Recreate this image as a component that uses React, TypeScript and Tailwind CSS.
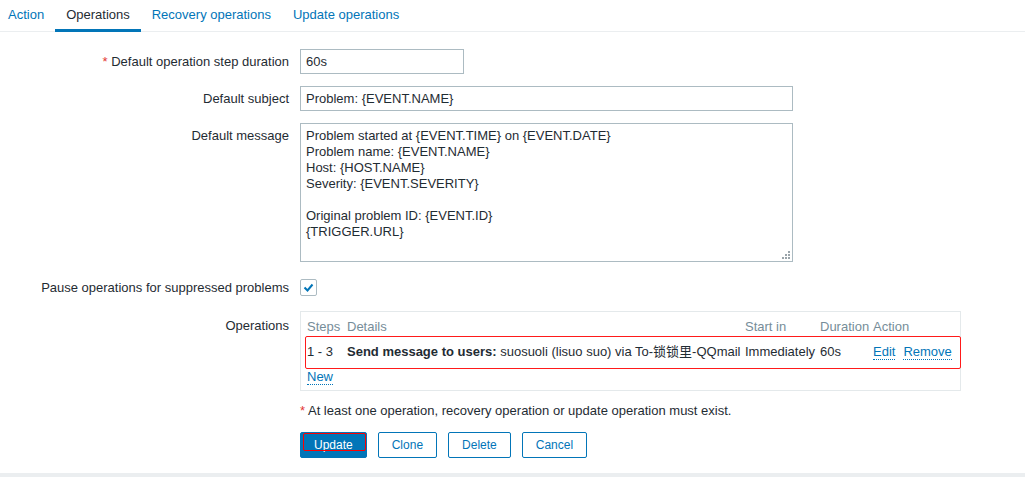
import React from 'react';

const tabs = ['Action', 'Operations', 'Recovery operations', 'Update operations'];

const messageLines = [
  'Problem started at {EVENT.TIME} on {EVENT.DATE}',
  'Problem name: {EVENT.NAME}',
  'Host: {HOST.NAME}',
  'Severity: {EVENT.SEVERITY}',
  '',
  'Original problem ID: {EVENT.ID}',
  '{TRIGGER.URL}',
];

const Row: React.FC<{ label: React.ReactNode; labelClass?: string; className?: string; children: React.ReactNode }> = ({
  label,
  labelClass = 'pt-[6px]',
  className = '',
  children,
}) => (
  <div className={`flex items-start ${className}`}>
    <div className={`w-[300px] shrink-0 pr-[11px] text-right leading-[14px] whitespace-nowrap ${labelClass}`}>{label}</div>
    <div>{children}</div>
  </div>
);

const Link: React.FC<{ children: React.ReactNode }> = ({ children }) => (
  <span className="text-[#0275b8] border-b border-dotted border-[#0275b8] cursor-pointer">{children}</span>
);

const cols = 'grid grid-cols-[40px_398px_75px_53px_1fr]';

export default function App() {
  return (
    <div className="min-h-[477px] bg-[#ebeef0] font-['Liberation_Sans','Noto_Sans_CJK_SC',sans-serif] text-[13px] text-[#1f2c33]">
      <div className="bg-white h-[473px]">
        {/* tabs */}
        <div className="flex h-[32px] border-b border-[#ebeef0] -ml-[3px]">
          {tabs.map(t => (
            <div
              key={t}
              className={`h-[32px] px-[11px] pt-[8px] leading-[14px] cursor-pointer ${
                t === 'Operations' ? 'border-b-[3px] border-[#0275b8] text-[#1f2c33]' : 'text-[#0275b8]'
              }`}
            >
              {t}
            </div>
          ))}
        </div>

        <div className="pt-[17px]">
          <Row label={<><span className="text-[#e33734]">*</span> Default operation step duration</>}>
            <div className="w-[164px] h-[25px] border border-[#acbbc2] px-[5px] flex items-center leading-[14px]">60s</div>
          </Row>

          <Row label="Default subject" className="mt-[12px]">
            <div className="w-[493px] h-[25px] border border-[#acbbc2] px-[5px] flex items-center leading-[14px]">
              Problem: {'{EVENT.NAME}'}
            </div>
          </Row>

          <Row label="Default message" className="mt-[12px]">
            <div className="relative w-[493px] h-[139px] border border-[#acbbc2] px-[5px] pt-[4px] leading-[16px]">
              {messageLines.map((l, i) => (
                <div key={i} className="h-[16px] whitespace-pre">{l}</div>
              ))}
              <svg className="absolute right-[2px] bottom-[2px]" width="8" height="8" viewBox="0 0 8 8">
                <g fill="#9aa4aa">
                  <rect x="6" y="0" width="2" height="2" />
                  <rect x="3" y="3" width="2" height="2" />
                  <rect x="6" y="3" width="2" height="2" />
                  <rect x="0" y="6" width="2" height="2" />
                  <rect x="3" y="6" width="2" height="2" />
                  <rect x="6" y="6" width="2" height="2" />
                </g>
              </svg>
            </div>
          </Row>

          <Row label="Pause operations for suppressed problems" className="mt-[13px]">
            <div className="mt-[4px] w-[17px] h-[17px] border border-[#acbbc2] rounded-[2px] bg-white flex items-center justify-center">
              <svg width="13" height="13" viewBox="0 0 13 13">
                <polyline points="2.5,6.5 5.5,9.5 10.5,3.5" fill="none" stroke="#0275b8" strokeWidth="2" />
              </svg>
            </div>
          </Row>

          <Row label="Operations" labelClass="pt-[8px]" className="mt-[15px]">
            <div className="w-[661px] border border-[#e4e9eb] pl-[4px] pt-[8px] pb-[6px] leading-[14px]">
              <div className={`${cols} pl-[2px] text-[#768d99]`}>
                <div>Steps</div>
                <div>Details</div>
                <div>Start in</div>
                <div>Duration</div>
                <div>Action</div>
              </div>
              <div className="mt-[2px] w-[656px] border border-[#ff1a1a] rounded-[2px] pl-[1px] pt-[8px] pb-[8px]">
                <div className={`${cols} whitespace-nowrap`}>
                  <div>1 - 3</div>
                  <div>
                    <b>Send message to users:</b> suosuoli (lisuo suo) via To-锁锁里-QQmail
                  </div>
                  <div>Immediately</div>
                  <div>60s</div>
                  <div className="flex gap-[8px]">
                    <Link>Edit</Link>
                    <Link>Remove</Link>
                  </div>
                </div>
              </div>
              <div className="mt-[1px] pl-[2px]">
                <Link>New</Link>
              </div>
            </div>
          </Row>

          <div className="ml-[300px] mt-[13px] leading-[14px]">
            <span className="text-[#e33734]">*</span> At least one operation, recovery operation or update operation must exist.
          </div>

          <div className="ml-[300px] mt-[14px] flex gap-[11px] text-[12px]">
            <button className="relative h-[26px] px-[13px] rounded-[2px] border border-[#0275b8] bg-[#0275b8] text-white leading-[14px]">
              Update
              <span className="absolute block left-[2px] right-0 top-0 h-[18px] border border-[#ff0000] rounded-[2px]" />
            </button>
            {['Clone', 'Delete', 'Cancel'].map(b => (
              <button
                key={b}
                className="h-[26px] px-[13px] rounded-[2px] border border-[#0275b8] bg-white text-[#0275b8] leading-[14px]"
              >
                {b}
              </button>
            ))}
          </div>
        </div>
      </div>
    </div>
  );
}
